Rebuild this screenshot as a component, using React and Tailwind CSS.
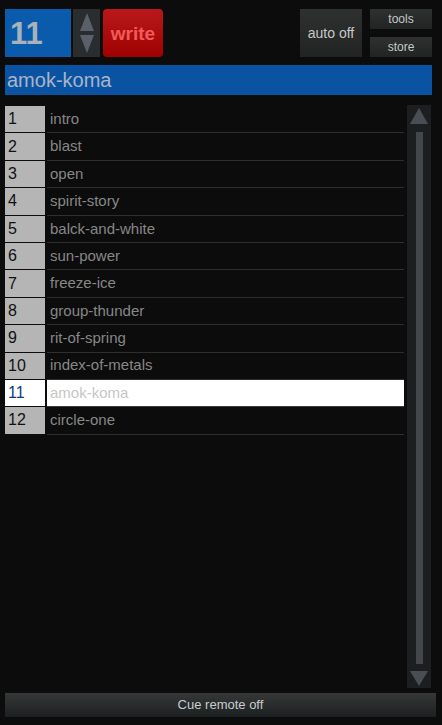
import { useState } from 'react';

const cues = [
  'intro',
  'blast',
  'open',
  'spirit-story',
  'balck-and-white',
  'sun-power',
  'freeze-ice',
  'group-thunder',
  'rit-of-spring',
  'index-of-metals',
  'amok-koma',
  'circle-one',
];

export default function App() {
  const [current, setCurrent] = useState(11);

  return (
    <div className="w-[442px] h-[725px] bg-[#0c0c0c] font-['Liberation_Sans',Arial,sans-serif] overflow-hidden relative">
      {/* Top controls */}
      <div className="flex px-[5px] pt-[9px] h-[57px]">
        <div className="w-[66px] h-[48px] bg-[#0b5bad] flex items-center pl-[5px] text-[31px] font-bold text-[#a9b1ba] leading-none">
          {current}
        </div>
        <div className="ml-[2px] w-[27px] h-[48px] bg-[#2a2d30] flex flex-col items-center justify-center gap-[4px]">
          <button onClick={() => setCurrent(Math.max(1, current - 1))} className="w-0 h-0 border-l-[7px] border-r-[7px] border-b-[18px] border-l-transparent border-r-transparent border-b-[#5a6068]" />
          <button onClick={() => setCurrent(Math.min(cues.length, current + 1))} className="w-0 h-0 border-l-[7px] border-r-[7px] border-t-[18px] border-l-transparent border-r-transparent border-t-[#5a6068]" />
        </div>
        <button className="ml-[3px] w-[60px] h-[48px] rounded-[4px] bg-gradient-to-b from-[#b8181a] to-[#9f0000] text-[#f25a5a] font-bold text-[19px] flex items-center justify-center pt-[2px]">
          write
        </button>
        <div className="flex-1" />
        <button className="w-[62px] h-[48px] bg-gradient-to-b from-[#2f3131] to-[#222424] text-[#c4c8c8] text-[14px] flex items-center justify-center">
          auto off
        </button>
        <div className="ml-[8px] mr-[5px] w-[62px] flex flex-col gap-[8px]">
          <button className="h-[20px] bg-gradient-to-b from-[#2f3131] to-[#222424] text-[#c4c8c8] text-[12px] leading-none flex items-center justify-center">
            tools
          </button>
          <button className="h-[20px] bg-gradient-to-b from-[#2f3131] to-[#222424] text-[#c4c8c8] text-[12px] leading-none flex items-center justify-center">
            store
          </button>
        </div>
      </div>

      {/* Title */}
      <div className="mx-[5px] mr-[10px] mt-[8px] h-[30px] bg-[#0a53a2] flex items-center pl-[2px] text-[20px] text-[#aab4c6] leading-none">
        {cues[current - 1]}
      </div>

      {/* List + scrollbar */}
      <div className="flex mt-[10px] pl-[5px] h-[583px]">
        <div className="w-[399px] pt-[1px]">
          {cues.map((name, i) => {
            const n = i + 1;
            const active = n === current;
            return (
              <div key={name} onClick={() => setCurrent(n)} className="flex h-[27.4px] cursor-pointer">
                <div className={`w-[40px] h-full border-b border-[#0c0c0c] flex items-center pl-[3px] text-[16px] ${active ? 'bg-white text-[#0a3d80]' : 'bg-[#b5b5b5] text-[#111]'}`}>
                  {n}
                </div>
                <div className={`ml-[2px] flex-1 h-full border-b flex items-center pl-[3px] text-[15px] ${active ? 'bg-white text-[#c6c6c6] border-[#3a3a3a]' : 'text-[#878787] border-[#2e2e2e]'}`}>
                  {name}
                </div>
              </div>
            );
          })}
        </div>
        <div className="ml-[3px] w-[24px] h-full bg-[#1c1e1f] flex flex-col items-center pt-[3px] pb-[2px]">
          <div className="w-0 h-0 border-l-[9px] border-r-[9px] border-b-[16px] border-l-transparent border-r-transparent border-b-[#4a4e54]" />
          <div className="mt-[8px] w-[7px] flex-1 bg-[#43474b]" />
          <div className="mt-[7px] w-0 h-0 border-l-[9px] border-r-[9px] border-t-[15px] border-l-transparent border-r-transparent border-t-[#4a4e54]" />
        </div>
      </div>

      {/* Bottom bar */}
      <div className="mx-[5px] mr-[6px] mt-[5px] h-[24px] bg-gradient-to-b from-[#363838] to-[#1d2021] text-[#c8cccc] text-[13px] flex items-center justify-center">
        Cue remote off
      </div>
    </div>
  );
}
